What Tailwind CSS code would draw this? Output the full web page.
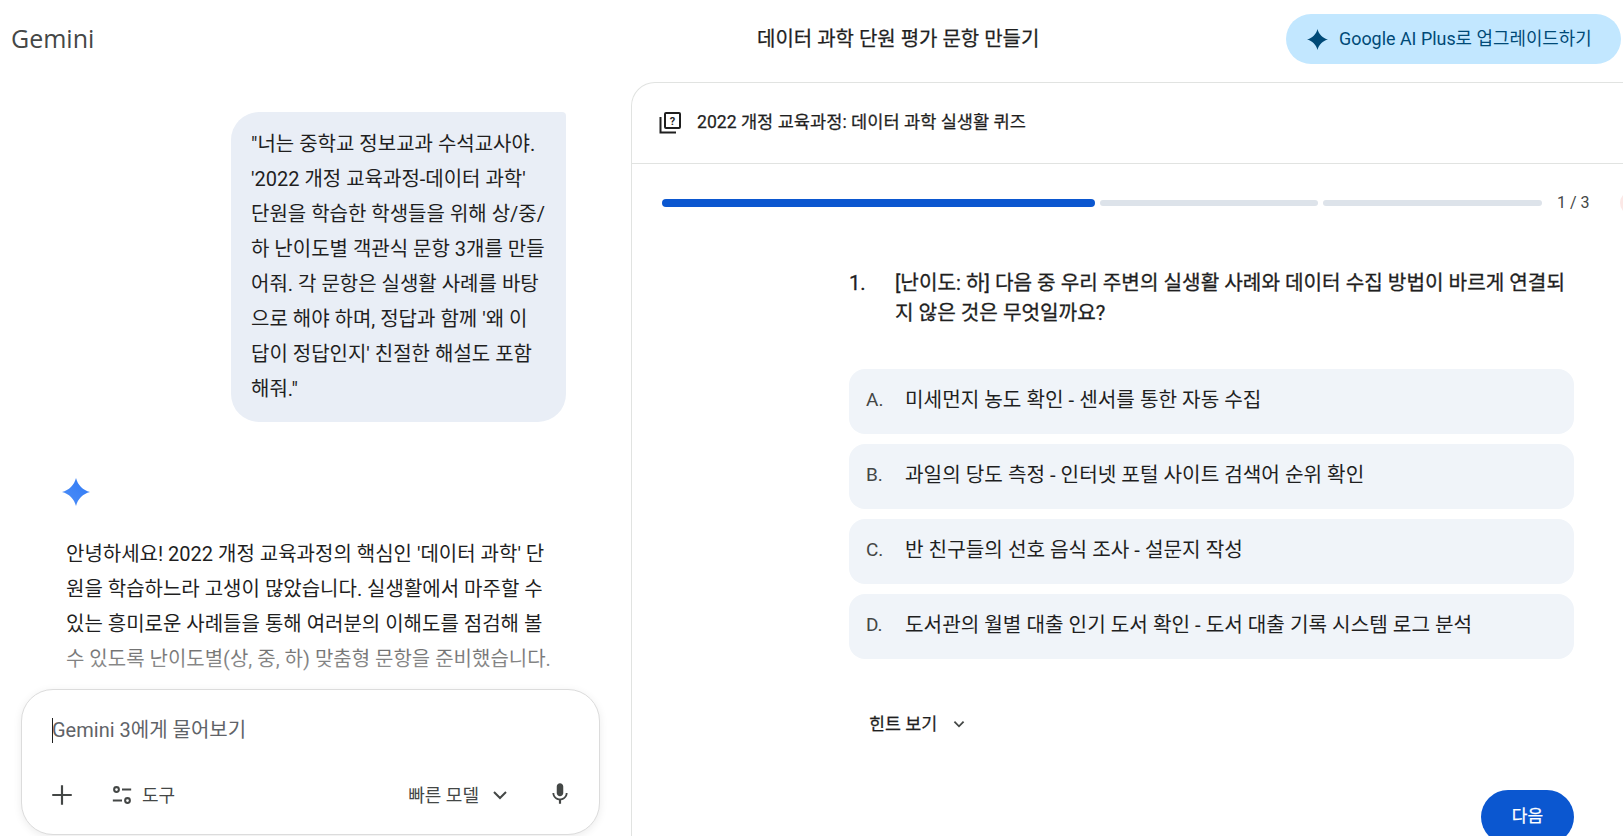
<!DOCTYPE html>
<html lang="ko">
<head>
    <meta charset="UTF-8">
    <title>Gemini</title>
    <script src="https://cdn.jsdelivr.net/npm/@tailwindcss/browser@4"></script>
</head>
<body class="bg-white overflow-hidden font-['Roboto','Noto_Sans_CJK_KR',sans-serif] text-[#1f1f1f]">
<div class="w-[1623px] h-[836px] overflow-hidden flex flex-col">

    <!-- Top bar -->
    <header class="h-[82px] shrink-0 flex">
        <div class="w-[631px] pl-[11px] pt-[22px] text-[25px] leading-[32px] text-[#444746] font-['Open_Sans','Noto_Sans_CJK_KR',sans-serif]">Gemini</div>
        <div class="pl-[126px] pt-[24px] text-[20px] leading-[30px] [-webkit-text-stroke:0.25px]">데이터 과학 단원 평가 문항 만들기</div>
        <div class="ml-auto mr-[2px] mt-[14px] w-[335px] h-[50px] rounded-full bg-[#c2e7ff] text-[#004a77] flex items-center pl-[21px] gap-[11px] text-[17.9px]">
            <svg class="w-[21px] h-[21px]" viewBox="0 0 24 24"><path fill="#004a77" d="M12 0C13.5 6 18 10.5 24 12C18 13.5 13.5 18 12 24C10.5 18 6 13.5 0 12C6 10.5 10.5 6 12 0Z"/></svg>
            <span>Google AI Plus로 업그레이드하기</span>
        </div>
    </header>

    <div class="flex flex-1 min-h-0">
        <!-- Chat column -->
        <div class="relative w-[631px] shrink-0">
            <div class="ml-[231px] mt-[30px] w-[335px] rounded-[28px] rounded-tr-[4px] bg-[#e9eef6] px-5 pt-[15px] pb-[15px] text-[20px] leading-[35px]">
                "너는 중학교 정보교과 수석교사야. '2022 개정 교육과정-데이터 과학' 단원을 학습한 학생들을 위해 상/중/하 난이도별 객관식 문항 3개를 만들어줘. 각 문항은 실생활 사례를 바탕으로 해야 하며, 정답과 함께 '왜 이 답이 정답인지' 친절한 해설도 포함해줘."
            </div>
            <svg class="ml-[61px] mt-[56px] w-[30px] h-[28px]" viewBox="0 0 24 24">
                <defs><linearGradient id="spark" x1="0" y1="1" x2="1" y2="0"><stop offset="0" stop-color="#4f8ff7"/><stop offset="1" stop-color="#2f79f5"/></linearGradient></defs>
                <path fill="url(#spark)" d="M12 0C13.5 6 18 10.5 24 12C18 13.5 13.5 18 12 24C10.5 18 6 13.5 0 12C6 10.5 10.5 6 12 0Z"/>
            </svg>
            <div class="ml-[66px] mt-[31px] w-[490px] text-[20px] leading-[35px]">
                안녕하세요! 2022 개정 교육과정의 핵심인 '데이터 과학' 단원을 학습하느라 고생이 많았습니다. 실생활에서 마주할 수 있는 흥미로운 사례들을 통해 여러분의 이해도를 점검해 볼 수 있도록 난이도별(상, 중, 하) 맞춤형 문항을 준비했습니다.
            </div>

            <!-- fade above the prompt box -->
            <div class="absolute left-0 right-0 top-[555px] h-[50px] bg-linear-to-b from-white/30 to-white/60"></div>

            <!-- Prompt box -->
            <div class="absolute left-[21px] top-[607px] w-[579px] h-[146px] rounded-[32px] bg-white border border-[#dcdcdc] shadow-[0_2px_8px_rgba(0,0,0,0.08)]">
                <div class="absolute left-[30px] top-[28px] w-px h-[25px] bg-[#1f1f1f]"></div>
                <div class="pl-[30px] pt-[26px] text-[20px] leading-[28px] text-[#5f6368]">Gemini 3에게 물어보기</div>
                <div class="absolute left-[27px] right-[26px] top-[90px] h-[30px] flex items-center text-[#444746] text-[18px]">
                    <svg class="w-[26px] h-[26px]" viewBox="0 0 24 24"><path fill="none" stroke="#444746" stroke-width="2" d="M12 3v18M3 12h18"/></svg>
                    <svg class="ml-[36px] w-[22px] h-[24px]" viewBox="0 0 24 24" fill="none" stroke="#444746" stroke-width="2.2"><circle cx="6" cy="6" r="2.6"/><circle cx="18" cy="18" r="2.6"/><path d="M12 6h10M2 18h10"/></svg>
                    <span class="ml-[9px]">도구</span>
                    <span class="ml-auto">빠른 모델</span>
                    <svg class="ml-[9px] w-[24px] h-[24px]" viewBox="0 0 24 24"><path fill="none" stroke="#444746" stroke-width="2" d="M6 9l6 6 6-6"/></svg>
                    <svg class="ml-[35px] w-[26px] h-[26px] -mt-[3px]" viewBox="0 0 24 24"><path fill="#444746" d="M12 14c1.66 0 3-1.34 3-3V5c0-1.66-1.34-3-3-3S9 3.34 9 5v6c0 1.66 1.34 3 3 3zm5.3-3c0 3-2.54 5.1-5.3 5.1S6.7 14 6.7 11H5c0 3.41 2.72 6.23 6 6.72V21h2v-3.28c3.28-.48 6-3.3 6-6.72h-1.7z"/></svg>
                </div>
            </div>
        </div>

        <!-- Quiz panel -->
        <section class="flex-1 border-l border-t border-[#e1e3e1] rounded-tl-[24px] flex flex-col min-w-0">
            <div class="h-[81px] shrink-0 border-b border-[#e1e3e1] flex items-center pl-[26px] pb-px gap-[15px] text-[17.6px]">
                <svg class="w-[24px] h-[24px]" viewBox="0 0 24 24" fill="none" stroke="#1f1f1f" stroke-width="2"><rect x="7" y="2" width="15" height="15" rx="1"/><path d="M2.5 6v15.5H18"/><text x="14.5" y="14" font-size="11" font-family="Roboto" font-weight="700" text-anchor="middle" fill="#1f1f1f" stroke="none">?</text></svg>
                <span class="[-webkit-text-stroke:0.25px]">2022 개정 교육과정: 데이터 과학 실생활 퀴즈</span>
            </div>

            <div class="pl-[30px] pt-[35px] flex items-center h-[43px] text-[16px] text-[#444746]">
                <div class="w-[433px] h-[8px] rounded-full bg-[#0b57d0] shrink-0"></div>
                <div class="ml-[5px] w-[218px] h-[6px] rounded-full bg-[#dde3ea] shrink-0"></div>
                <div class="ml-[5px] w-[219px] h-[6px] rounded-full bg-[#dde3ea] shrink-0"></div>
                <span class="ml-[15px] shrink-0">1 / 3</span>
                <span class="ml-[30px] w-[24px] h-[24px] rounded-full bg-[#fce8e6] shrink-0"></span>
            </div>

            <div class="ml-[217px] w-[725px] mt-[61px]">
                <div class="flex text-[20.2px] leading-[30px] [-webkit-text-stroke:0.3px]">
                    <span class="w-[46px] shrink-0">1.</span>
                    <p class="w-[676px]">[난이도: 하] 다음 중 우리 주변의 실생활 사례와 데이터 수집 방법이 바르게 연결되지 않은 것은 무엇일까요?</p>
                </div>

                <div class="mt-[41px] flex flex-col gap-[10px] text-[20.2px]">
                    <div class="h-[65px] rounded-[16px] bg-[#f0f4f9] flex items-center pl-[17px] pb-[3px]"><span class="w-[39px] text-[19px] text-[#444746]">A.</span><span>미세먼지 농도 확인 - 센서를 통한 자동 수집</span></div>
                    <div class="h-[65px] rounded-[16px] bg-[#f0f4f9] flex items-center pl-[17px] pb-[3px]"><span class="w-[39px] text-[19px] text-[#444746]">B.</span><span>과일의 당도 측정 - 인터넷 포털 사이트 검색어 순위 확인</span></div>
                    <div class="h-[65px] rounded-[16px] bg-[#f0f4f9] flex items-center pl-[17px] pb-[3px]"><span class="w-[39px] text-[19px] text-[#444746]">C.</span><span>반 친구들의 선호 음식 조사 - 설문지 작성</span></div>
                    <div class="h-[65px] rounded-[16px] bg-[#f0f4f9] flex items-center pl-[17px] pb-[3px]"><span class="w-[39px] text-[19px] text-[#444746]">D.</span><span>도서관의 월별 대출 인기 도서 확인 - 도서 대출 기록 시스템 로그 분석</span></div>
                </div>

                <div class="mt-[50px] ml-[20px] flex items-center h-[30px] text-[17.4px] [-webkit-text-stroke:0.25px]">
                    <span>힌트 보기</span>
                    <svg class="ml-[11px] w-[22px] h-[22px]" viewBox="0 0 24 24"><path fill="none" stroke="#444746" stroke-width="2" d="M7 9.5l5 5 5-5"/></svg>
                </div>

                <div class="mt-[51px] flex justify-end">
                    <div class="w-[93px] h-[54px] rounded-full bg-[#0b57d0] text-white flex items-center justify-center text-[17px] [-webkit-text-stroke:0.25px]">다음</div>
                </div>
            </div>
        </section>
    </div>
</div>
</body>
</html>
